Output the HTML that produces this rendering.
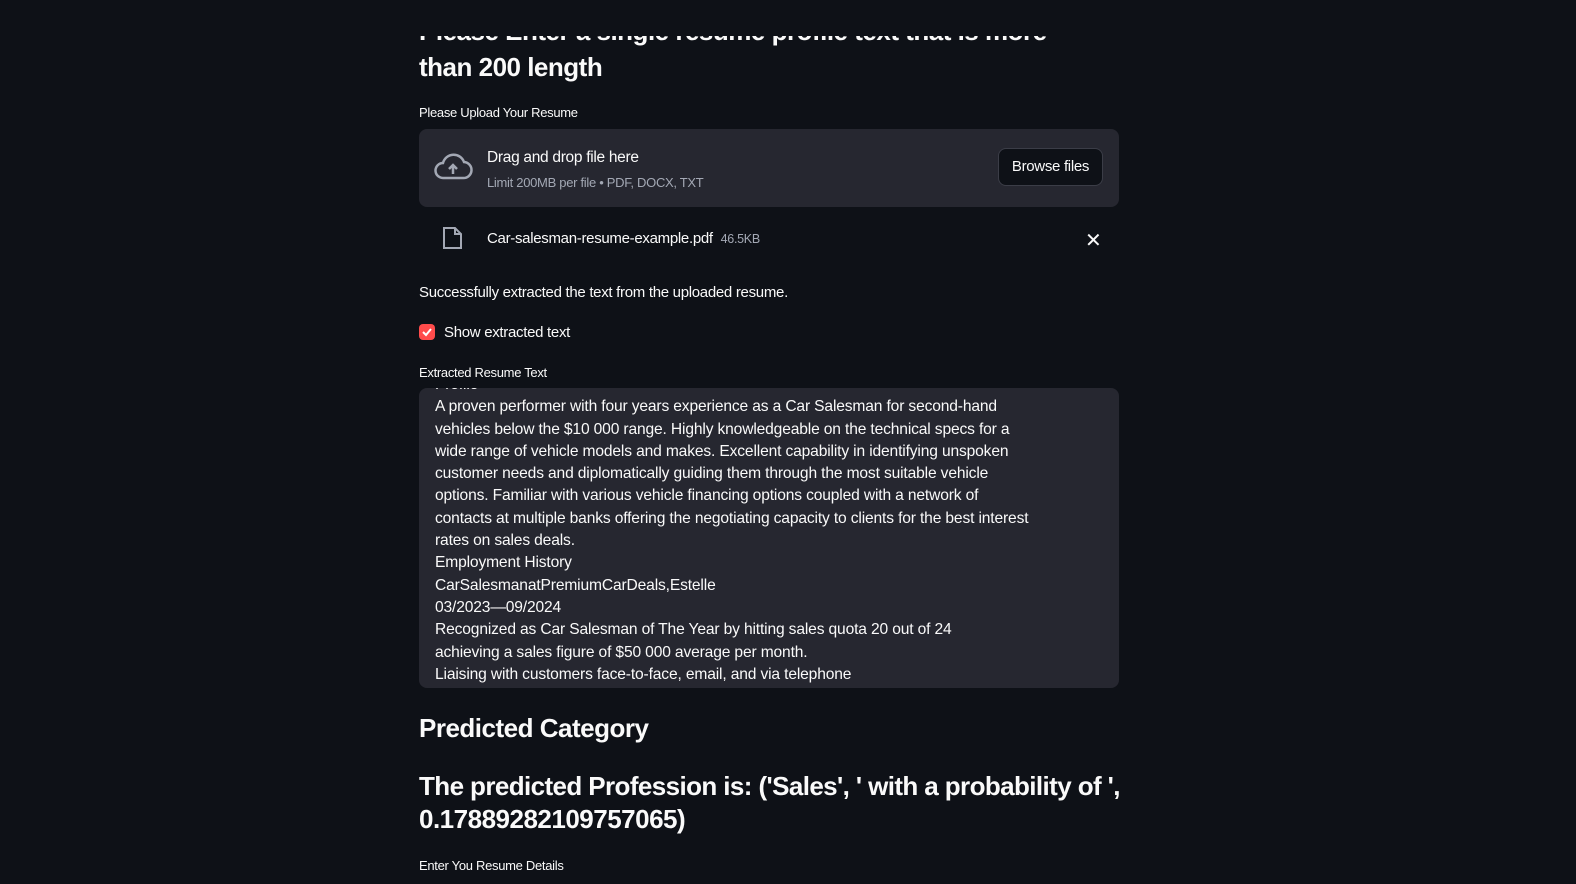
<!DOCTYPE html>
<html><head><meta charset="utf-8"><style>
*{margin:0;padding:0;box-sizing:border-box}
body{width:1576px;height:884px;background:#0e1117;color:#fafafa;font-family:"Liberation Sans",sans-serif;overflow:hidden;position:relative}
.a{position:absolute;white-space:nowrap}
h1{font-size:26px;font-weight:bold;letter-spacing:-0.5px}
.lbl{font-size:13px;letter-spacing:-0.3px}
.t{font-size:15px;letter-spacing:-0.3px}
</style></head><body>
<div class="a" style="left:419px;top:36px;height:12px;overflow:hidden;width:700px"><h1 style="position:absolute;left:0;top:-20px">Please Enter a single resume profile text that is more</h1></div>
<h1 class="a" style="left:419px;top:52px">than 200 length</h1>
<div class="a lbl" style="left:419px;top:105px">Please Upload Your Resume</div>
<div class="a" style="left:419px;top:129px;width:700px;height:78px;background:#262730;border-radius:8px"></div>
<svg class="a" style="left:433px;top:152px" width="40" height="30" viewBox="0 0 40 30"><path d="M10 26 H30 A8 8 0 0 0 31 10 A11 11 0 0 0 10 11 A7.5 7.5 0 0 0 10 26Z" fill="none" stroke="#a3a8b4" stroke-width="2.5"/><path d="M20 22 V13 M16 17 L20 13 L24 17" stroke="#a3a8b4" stroke-width="2.5" fill="none"/></svg>
<div class="a t" style="left:487px;top:149px;font-size:15.5px">Drag and drop file here</div>
<div class="a" style="left:487px;top:175px;font-size:13px;color:#a3a8b4;letter-spacing:-0.3px">Limit 200MB per file • PDF, DOCX, TXT</div>
<div class="a t" style="left:998px;top:148px;width:105px;height:38px;border:1px solid #3b3d47;border-radius:8px;background:#0e1117;text-align:center;line-height:36px">Browse files</div>
<svg class="a" style="left:442px;top:226px" width="22" height="24" viewBox="0 0 22 24"><path d="M2 2 H13 L19 8 V22 H2Z M13 2 V8 H19" fill="none" stroke="#a3a8b4" stroke-width="2"/></svg>
<div class="a t" style="left:487px;top:230px">Car-salesman-resume-example.pdf <span style="font-size:12.5px;color:#a3a8b4;margin-left:4px">46.5KB</span></div>
<div class="a" style="left:1085px;top:228px;font-size:20px;color:#fafafa">✕</div>
<div class="a t" style="left:419px;top:284px">Successfully extracted the text from the uploaded resume.</div>
<div class="a" style="left:419px;top:324px;width:16px;height:16px;background:#ff4b4b;border-radius:4px"></div>
<svg class="a" style="left:421px;top:326px" width="12" height="12" viewBox="0 0 12 12"><path d="M2 6 L5 9 L10 3" stroke="#fff" stroke-width="2" fill="none"/></svg>
<div class="a t" style="left:444px;top:324px">Show extracted text</div>
<div class="a lbl" style="left:419px;top:365px">Extracted Resume Text</div>
<div class="a" style="left:419px;top:388px;width:700px;height:300px;background:#262730;border-radius:8px;overflow:hidden">
<div class="t" style="position:absolute;left:16px;top:-14px;line-height:22.3px;white-space:pre;font-size:15.6px;letter-spacing:-0.15px">Profile
A proven performer with four years experience as a Car Salesman for second-hand
vehicles below the $10 000 range. Highly knowledgeable on the technical specs for a
wide range of vehicle models and makes. Excellent capability in identifying unspoken
customer needs and diplomatically guiding them through the most suitable vehicle
options. Familiar with various vehicle financing options coupled with a network of
contacts at multiple banks offering the negotiating capacity to clients for the best interest
rates on sales deals.
Employment History
CarSalesmanatPremiumCarDeals,Estelle
03/2023—09/2024
Recognized as Car Salesman of The Year by hitting sales quota 20 out of 24
achieving a sales figure of $50 000 average per month.
Liaising with customers face-to-face, email, and via telephone</div></div>
<h1 class="a" style="left:419px;top:713px">Predicted Category</h1>
<h1 class="a" style="left:419px;top:771px;letter-spacing:-0.6px">The predicted Profession is: ('Sales', ' with a probability of ',</h1>
<h1 class="a" style="left:419px;top:804px">0.17889282109757065)</h1>
<div class="a lbl" style="left:419px;top:858px">Enter You Resume Details</div>
</body></html>
